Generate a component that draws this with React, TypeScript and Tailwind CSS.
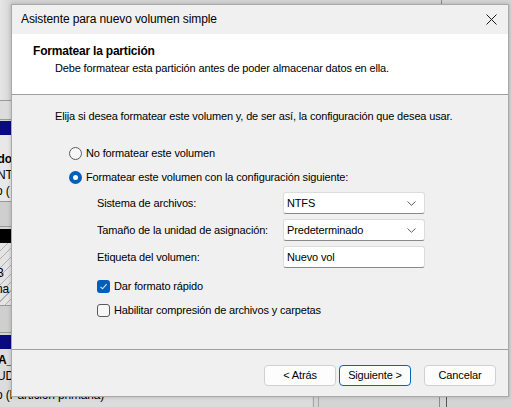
import React from 'react'

const font = { fontFamily: '"Liberation Sans", Arial, sans-serif' }

const Radio = ({ checked }: { checked?: boolean }) =>
  checked ? (
    <span className="w-[13px] h-[13px] rounded-full bg-[#005fb8] flex items-center justify-center shrink-0">
      <span className="w-[5px] h-[5px] rounded-full bg-white" />
    </span>
  ) : (
    <span className="w-[13px] h-[13px] rounded-full border border-[#5a5a5a] bg-[#f7f7f7] shrink-0" />
  )

const Check = ({ checked }: { checked?: boolean }) =>
  checked ? (
    <span className="w-[13px] h-[13px] rounded-[3px] bg-[#005fb8] flex items-center justify-center shrink-0">
      <svg width="9" height="9" viewBox="0 0 9 9" fill="none">
        <path d="M1.5 4.8 L3.6 6.8 L7.6 2.2" stroke="#dbe8f6" strokeWidth="1.1" />
      </svg>
    </span>
  ) : (
    <span className="w-[13px] h-[13px] rounded-[3px] border border-[#5a5a5a] bg-[#f7f7f7] shrink-0" />
  )

const Select = ({ value }: { value: string }) => (
  <div className="w-[142px] h-[22px] bg-white border border-[#dcdcdc] border-b-[#8a8a8a] rounded-[3px] flex items-center justify-between pl-[3px] pr-[8px]">
    <span>{value}</span>
    <svg width="9" height="5" viewBox="0 0 9 5" fill="none">
      <path d="M0.5 0.5 L4.5 4.3 L8.5 0.5" stroke="#606060" strokeWidth="1" />
    </svg>
  </div>
)

const Button = ({ label, primary }: { label: string; primary?: boolean }) => (
  <button
    className={
      'w-[72px] h-[21px] rounded-[4px] bg-[#fdfdfd] flex items-center justify-center ' +
      (primary ? 'border border-[#0067c0]' : 'border border-[#d0d0d0]')
    }
  >
    {label}
  </button>
)

const Backdrop = () => (
  <div className="absolute inset-0 bg-[#d4d4d4] overflow-hidden text-[12px] leading-[15px] text-black" style={font}>
    <div className="absolute left-0 top-0 w-[11px] h-[100px] bg-gradient-to-r from-[#e6e6e6] to-[#d6d6d6]" />
    <div className="absolute left-0 top-[100px] w-[11px] h-[20px] bg-[#dcdcdc] border-t border-b border-[#9a9a9a]" />
    <div className="absolute left-0 top-[121px] w-[11px] h-[14px] bg-[#0a0a80]" />
    <div className="absolute left-0 top-[135px] w-[11px] h-[66px] bg-[#e8e8e8]" />
    <div className="absolute left-[-9px] top-[152px] font-bold">ado</div>
    <div className="absolute left-[-3px] top-[168px]">NT</div>
    <div className="absolute left-[-4px] top-[184px]">o (</div>
    <div className="absolute left-0 top-[201px] w-[11px] h-[26px] bg-[#cfcfcf] border-t border-b border-[#9a9a9a]" />
    <div className="absolute left-0 top-[229px] w-[11px] h-[14px] bg-black" />
    <div
      className="absolute left-0 top-[243px] w-[11px] h-[62px]"
      style={{ background: 'repeating-linear-gradient(135deg,#e4e4e4 0 5px,#b0b0b0 5px 6px)' }}
    />
    <div className="absolute left-[-4px] top-[266px]">B</div>
    <div className="absolute left-[-4px] top-[282px]">na</div>
    <div className="absolute left-0 top-[305px] w-[11px] h-[28px] bg-[#cfcfcf] border-t border-b border-[#9a9a9a]" />
    <div className="absolute left-0 top-[335px] w-[11px] h-[14px] bg-[#0a0a80]" />
    <div className="absolute left-0 top-[349px] w-[312px] h-[58px] bg-[#dcdcdc]" />
    <div className="absolute left-[-2px] top-[353px] font-bold">A_</div>
    <div className="absolute left-[-3px] top-[369px]">UD</div>
    <div className="absolute left-[-4px] top-[388px]">o (Partición primaria)</div>
    <div className="absolute left-[313px] top-[396px] w-px h-[11px] bg-[#a8a8a8]" />
    <div className="absolute left-[318px] top-[396px] w-px h-[11px] bg-[#a8a8a8]" />
    <div className="absolute left-[439px] top-[396px] w-px h-[11px] bg-[#8a8a8a]" />
    <div className="absolute left-[446px] top-[396px] w-px h-[11px] bg-[#555]" />
    <div className="absolute left-[441px] top-0 w-px h-[5px] bg-[#8a8a8a]" />
  </div>
)

export default function App() {
  return (
    <div className="relative w-[511px] h-[407px] overflow-hidden text-[11px] leading-[15px] tracking-[-0.15px] text-black" style={font}>
      <Backdrop />
      <div className="absolute left-[11px] top-[4px] w-[498px] h-[393px] bg-[#f0f0f0] border border-[#a9a9a9] flex flex-col shadow-[0_0_4px_rgba(0,0,0,0.2)]">
        <div className="h-[29px] flex items-center justify-between pl-[9px] pr-[11px] shrink-0">
          <span className="text-[12px] tracking-[-0.1px]">Asistente para nuevo volumen simple</span>
          <svg width="11" height="11" viewBox="0 0 11 11" fill="none">
            <path d="M0.5 0.5 L10.5 10.5 M10.5 0.5 L0.5 10.5" stroke="#1a1a1a" strokeWidth="1" />
          </svg>
        </div>
        <div className="h-[61px] bg-white border-b border-[#a0a0a0] pt-[10px] pl-[21px] shrink-0">
          <div className="font-bold text-[12px] tracking-[-0.2px]">Formatear la partición</div>
          <div className="pl-[22px] mt-[2px]">Debe formatear esta partición antes de poder almacenar datos en ella.</div>
        </div>
        <div className="flex-1 flex flex-col pl-[43px]">
          <div className="mt-[14px]">
            Elija si desea formatear este volumen y, de ser así, la configuración que desea usar.
          </div>
          <div className="mt-[22px] ml-[14px] flex items-center gap-[4px]">
            <Radio />
            <span>No formatear este volumen</span>
          </div>
          <div className="mt-[9px] ml-[14px] flex items-center gap-[4px]">
            <Radio checked />
            <span>Formatear este volumen con la configuración siguiente:</span>
          </div>
          <div className="ml-[42px] mt-[7px] grid grid-cols-[186px_142px] gap-y-[5px] items-center">
            <span>Sistema de archivos:</span>
            <Select value="NTFS" />
            <span>Tamaño de la unidad de asignación:</span>
            <Select value="Predeterminado" />
            <span>Etiqueta del volumen:</span>
            <div className="w-[142px] h-[22px] bg-white border border-[#dcdcdc] border-b-[#8a8a8a] rounded-[3px] flex items-center pl-[3px]">
              Nuevo vol
            </div>
          </div>
          <div className="ml-[42px] mt-[11px] flex items-center gap-[4px]">
            <Check checked />
            <span>Dar formato rápido</span>
          </div>
          <div className="ml-[42px] mt-[9px] flex items-center gap-[4px]">
            <Check />
            <span>Habilitar compresión de archivos y carpetas</span>
          </div>
        </div>
        <div className="h-[47px] border-t border-[#a0a0a0] flex items-start pt-[15px] pl-[252px] shrink-0">
          <Button label="< Atrás" />
          <div className="w-[3px]" />
          <Button label="Siguiente >" primary />
          <div className="w-[13px]" />
          <Button label="Cancelar" />
        </div>
      </div>
    </div>
  )
}
